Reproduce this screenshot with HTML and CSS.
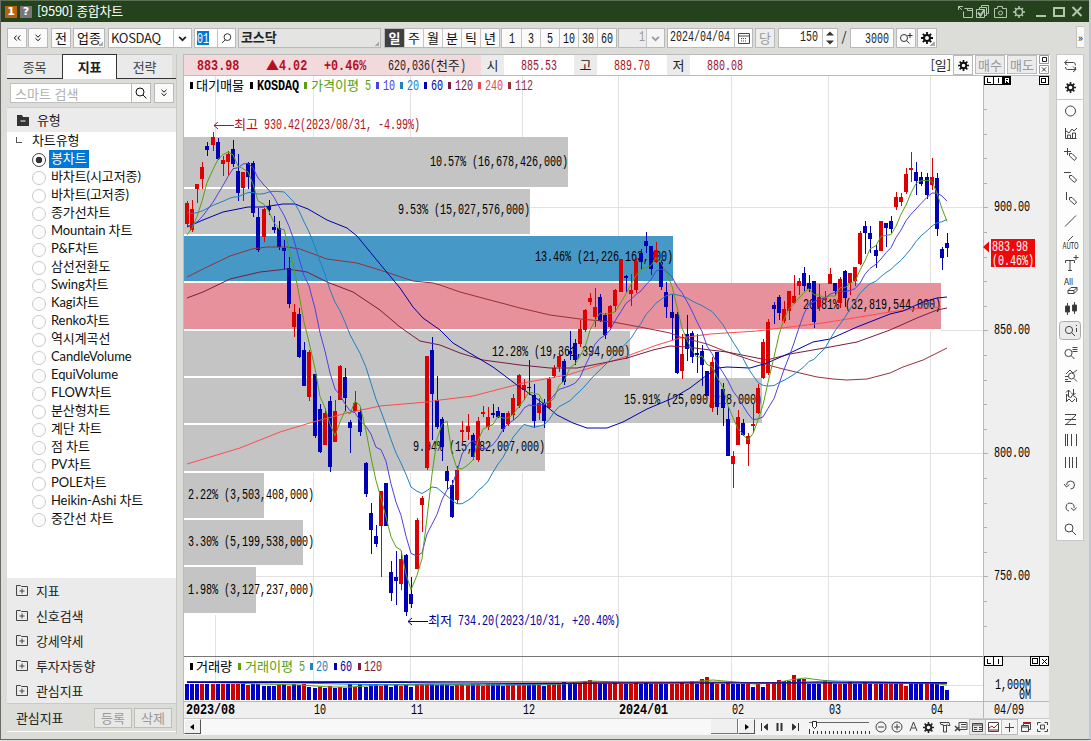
FILE: index.html
```
<!DOCTYPE html>
<html lang="ko">
<head>
<meta charset="UTF-8">
<meta name="viewport" content="width=device-width, initial-scale=1.0">
<title>[9590] 종합차트</title>
<link rel="stylesheet" href="styles.css">
</head>
<body>
<svg class="defs" width="0" height="0">
    <symbol id="gear" viewBox="0 0 12 12"><circle cx="6" cy="6" r="3" fill="none" stroke="currentColor" stroke-width="2"/><path d="M6 0v3M6 9v3M0 6h3M9 6h3M1.8 1.8l2 2M8.2 8.2l2 2M10.2 1.8l-2 2M3.8 8.2l-2 2" stroke="currentColor" stroke-width="1.8"/></symbol>
    <symbol id="search" viewBox="0 0 12 12"><circle cx="5" cy="5" r="4" fill="none" stroke="currentColor"/><path d="M8 8l3.5 3.5" stroke="currentColor"/></symbol>
    <symbol id="search-r" viewBox="0 0 12 12"><circle cx="7" cy="4.5" r="3.7" fill="none" stroke="currentColor"/><path d="M4.5 7.5L1 11" stroke="currentColor"/></symbol>
    <symbol id="down2" viewBox="0 0 8 8"><path d="M1.5 .8L4 3.2 6.500 .8M1.500 4.300L4 6.700l2.500-2.400" fill="none" stroke="currentColor"/></symbol>
    <symbol id="down" viewBox="0 0 8 8"><path d="M1 2.500l3 3 3-3" fill="none" stroke="currentColor" stroke-width="1.500"/></symbol>
    <symbol id="folder" viewBox="0 0 12 11"><path d="M.5 .5h4l1 1h6v9H.5z" fill="none" stroke="#444"/><path d="M6 3.500v5M3.500 6h5" stroke="#444"/></symbol>
</svg>

<div class="window">
    <div class="titlebar">
        <span class="badge orange">1</span>
        <span class="badge gray">?</span>
        <span class="title">[9590] 종합차트</span>
        <svg class="title-icons" width="126" height="16" fill="none" stroke="#b4c6ae">
            <path d="M0 2.500h5M.5 2v4M1 3l3 3M5.500 7.500v6h9v-9h-5v2h5M9.500 4.500h-3"/>
            <path d="M18.500 5.500h8v8h-8zM21.500 5V3.500h7v8H27M23.500 3V1.500h7v8H29"/><path d="M20 8.500l2.500 3 4-6" stroke-width="2"/>
            <path d="M36.500 4.500h3v-2h5v2h4v9h-12z"/><circle cx="42.500" cy="9" r="2"/>
            <circle cx="61" cy="8" r="3.600" stroke-width="1.500"/><path d="M61 2v2M61 12v2M55 8h2M65 8h2M57 4l1.500 1.500M63.500 10.500L65 12M65 4l-1.500 1.500M58.500 10.500L57 12" stroke-width="1.500"/>
            <path d="M78 12h10" stroke-width="2"/>
            <path d="M96 4h10v8H96z" stroke-width="2"/>
            <path d="M114.500 3l9 9M123.500 3l-9 9" stroke-width="2"/>
        </svg>
    </div>

    <div class="toolbar">
        <button class="btn"><svg width="8" height="8" viewBox="0 0 8 8" class="rot"><use href="#down2"/></svg></button>
        <button class="btn"><svg width="8" height="8"><use href="#down2"/></svg></button>
        <button class="btn g3">전</button>
        <button class="btn upj corner">업종</button>
        <div class="combo"><span>KOSDAQ</span><i><svg width="9" height="9"><use href="#down"/></svg></i></div>
        <div class="code"><b><span class="num c2">01</span></b><i><svg width="11" height="11"><use href="#search-r"/></svg></i></div>
        <div class="name corner">코스닥</div>
        <div class="seg period"><b>일</b><span>주</span><span>월</span><span>분</span><span>틱</span><span>년</span></div>
        <div class="seg mins"><div><span class="num c1">1</span></div><div><span class="num c1">3</span></div><div><span class="num c1">5</span></div><div><span class="num c2">10</span></div><div><span class="num c2">30</span></div><div><span class="num c2">60</span></div></div>
        <div class="unit"><span class="num c1">1</span><i><svg width="9" height="9"><use href="#down"/></svg></i></div>
        <div class="date"><span class="num c10">2024/04/04</span><i><svg width="12" height="12" fill="none" stroke="#444"><path d="M.5 1.500h11v10H.5zM.5 4h11"/><path d="M3 6.500h6M3 9h6" stroke-dasharray="1 1"/></svg></i></div>
        <button class="btn g2 off">당</button>
        <div class="spin"><span class="num c3">150</span><i><svg width="8" height="16" fill="#333"><path d="M0 5.500l4-4 4 4zM0 10.500l4 4 4-4z"/></svg></i></div>
        <span class="slash">/</span>
        <div class="max"><span class="num c4">3000</span></div>
        <button class="btn g2"><svg width="14" height="12" fill="none" stroke="#333"><circle cx="5" cy="6" r="3.500"/><path d="M7.500 8.500l3 3M11 1v5M8.500 3.500h5"/></svg></button>
        <button class="btn corner"><svg width="12" height="12"><use href="#gear"/></svg></button>
        <button class="more">»</button>
    </div>

    <div class="content">
        <div class="side">
            <div class="tabs"><span>종목</span><b>지표</b><span>전략</span></div>
            <div class="find">
                <input type="text" placeholder="스마트 검색">
                <button class="btn glass"><svg width="12" height="12"><use href="#search"/></svg></button>
                <button class="btn g2"><svg width="8" height="8"><use href="#down2"/></svg></button>
            </div>
            <div class="group"><svg width="12" height="11"><path d="M0 0h5l1 2h6v9H0z" fill="#333"/><path d="M3.500 6h5" stroke="#fff"/></svg>유형</div>
            <div class="tree">
                <div class="root">차트유형</div>
                <ul id="types"></ul>
            </div>
            <div class="folders">
                <div><svg width="12" height="11"><use href="#folder"/></svg>지표</div>
                <div><svg width="12" height="11"><use href="#folder"/></svg>신호검색</div>
                <div><svg width="12" height="11"><use href="#folder"/></svg>강세약세</div>
                <div><svg width="12" height="11"><use href="#folder"/></svg>투자자동향</div>
                <div><svg width="12" height="11"><use href="#folder"/></svg>관심지표</div>
            </div>
            <div class="side-foot"><span>관심지표</span><button>등록</button><button>삭제</button></div>
        </div>

        <div class="main">
            <div class="quote">
                <div class="pink">
                    <div class="q1"><b class="num">883.98</b></div><div class="q2"><em>▲</em><b class="num">4.02</b></div><div class="q3"><b class="num">+0.46%</b></div><div class="q4"><span class="num c8">620,036(</span>천주<span class="num c1">)</span></div>
                </div>
                <span class="lab">시</span><span class="val"><span class="num c6">885.53</span></span>
                <span class="lab">고</span><span class="val"><span class="num c6">889.70</span></span>
                <span class="lab">저</span><span class="val"><span class="num c6">880.08</span></span>
                <span class="day">[일]</span>
                <button class="btn gearbtn"><svg width="11" height="11"><use href="#gear"/></svg></button>
                <button class="trade">매수</button>
                <button class="trade">매도</button>
                <svg class="mini" width="10" height="19" fill="#fff" stroke="#999"><path d="M.5 .5h9v8h-9zM.5 10.500h9v8h-9z"/><path d="M3.500 2.500h4v4h-4z" stroke="#222"/><path d="M3 12.500l4 4M7 12.500l-4 4" stroke="#333"/></svg>
            </div>

            <svg class="chart" width="866" height="642" viewBox="184 76 866 642">
                <rect x="184" y="76" width="799" height="625" fill="#fff"/>
                <rect x="984" y="76" width="65" height="642" fill="#efefef"/>
                <rect x="184" y="701" width="800" height="17" fill="#efefef"/>
                <g id="grid" stroke="#e2e2e2" shape-rendering="crispEdges"></g>
                <g id="profile"></g>
                <g id="volumes" shape-rendering="crispEdges"></g>
                <g id="candles" shape-rendering="crispEdges"></g>
                <g id="lines" fill="none" stroke-width="1"></g>
                <g stroke="#888" shape-rendering="crispEdges">
                    <path d="M184 656.500h865" stroke="#777"/>
                    <path d="M983.500 76v642M184 701.500h865" stroke="#b8b8b8"/>
                </g>
                <g id="ticks" stroke="#b0b0b0" shape-rendering="crispEdges"></g>
                <g id="legend"></g>
                <g id="labels"></g>
                <path d="M214 125.500h20M218 122l-4 3.500 4 3.500" fill="none" stroke="#b01020"/>
                <path d="M408 621.500h20M412 618l-4 3.500 4 3.500" fill="none" stroke="#0000a0"/>
                <rect x="991" y="239" width="44" height="28" fill="#f00808"/>
                <path d="M983 247l6-5.500v11z" fill="#f00808"/>
                <g id="price"></g>
                <g fill="#fff" stroke="#000" shape-rendering="crispEdges">
                    <path d="M984.500 76.500h9v8h-9zM993.500 76.500h9v8h-9zM1039.500 76.500h9v8h-9zM984.500 656.500h9v9h-9zM993.500 656.500h9v9h-9zM1030.500 656.500h9v9h-9zM1039.500 656.500h9v9h-9z"/>
                    <path d="M1003.500 76.500h7v8h-7z" fill="#000"/>
                    <path d="M1041.500 78.500h4v4h-4zM1032.500 658.500h5v5h-5z"/>
                    <path d="M987.500 78v4.500h3M998.500 78v5M987.500 659v4.500h3M998.500 659v5M1042 659l5 5M1047 659l-5 5" fill="none"/>
                    <path d="M1005.500 83v-4.500h3v2h-3M1007 80.500l2 2" stroke="#fff" fill="none"/>
                </g>
            </svg>

            <div class="bottom">
                <button class="arrow"><svg width="5" height="6"><path d="M4 0v6L0 3z"/></svg></button>
                <div class="track"><div class="thumb"></div></div>
                <button class="arrow"><svg width="5" height="6"><path d="M1 0v6l4-3z"/></svg></button>
                <svg class="play" width="116" height="16" fill="#333" stroke="#333">
                    <path d="M6.500 4v8M12.500 5v6L9 8z"/><path d="M22.500 4v8M26.500 4v8" stroke-width="2"/><path d="M37.500 5v6L41 8zM43.500 4v8"/>
                    <path d="M54 3.500h60" stroke="#666"/><path d="M54.500 10v5" /><path d="M54 13.500h61" stroke-width="3" stroke-dasharray="1 3"/><path d="M57.500 2.500h4v5l-2 2-2-2z" fill="#fff" stroke="#222"/>
                </svg>
                <svg class="bicons" width="176" height="16" fill="none" stroke="#444">
                    <circle cx="8" cy="8" r="5"/><path d="M5 8h6"/>
                    <circle cx="24" cy="8" r="5"/><path d="M21 8h6M24 5v6"/>
                    <path d="M37 12l3.500-9 3.500 9M38.500 9h4"/>
                    <use href="#gear" x="50" y="3" width="11" height="11"/>
                    <path d="M67 3.500h9l1 3h-2l-1-1v1h-4v-1h-2zM70.500 7v6h3V7"/>
                    <path d="M86 3.500h8v7h-8zM88 5.500h5M88 8h5"/><path d="M82 12l4-4M82 7l5 5" stroke-width="1.500"/>
                    <rect x="96.500" y=".5" width="16" height="15" fill="#e6e6e6" stroke="#bbb"/><path d="M99.500 4.500h10v8h-10zM99.500 6h10M101 8.500h3M101 10.500h3M106 8.500h3M106 10.500h3"/>
                    <rect x="112.500" y=".5" width="16" height="15" fill="#fff" stroke="#bbb"/><path d="M115.500 3.500h10v9h-10z"/><path d="M116 9l3-2 2 2 4-4M116 11h9" stroke="#a02020"/>
                    <rect x="128.500" y=".5" width="16" height="15" fill="#f4f4f4" stroke="#bbb"/><path d="M132 8.500h9M136.500 4v9"/>
                    <path d="M148.500 6.500h7v6h-7zM150.500 6V4.500h7v6h-2M148.500 8h7"/><path d="M150 3.500h8" stroke="#a02020"/>
                    <path d="M164.500 6V3.500h3M174.500 6V3.500h-3M164.500 10v2.500h3M174.500 10v2.500h-3M167.500 6h4v4h-4z"/>
                </svg>
            </div>
        </div>

        <div class="tools">
            <svg width="26" height="485" fill="none" stroke="#444">
                <path d="M8.500 9.500V7.500h8q2 0 2 3M10.500 5l-3 2.500 3 2.500M18.500 12v2.500h-8q-2 0-2-2.500M16 11.500l3 3-3 2.500"/>
                <use href="#gear" x="8" y="27" width="11" height="11"/>
                <path d="M0 44.500h26" stroke="#c8c8c8"/>
                <circle cx="13.500" cy="56" r="5"/>
                <path d="M8.500 73v10.500h11M10.500 84v-4h3v4M15.500 84v-6h3v6M9 76l3 2 3-4 2 2 3-3"/>
                <path d="M7 96.500h7M10.500 93v7M12.500 98.500h2.500l4.500 4.500-2 2.500-5-4.500z"/>
                <path d="M7 117.500h7M12.500 120.500h2.500l4.500 4.500-2 2.500-5-4.500z"/>
                <path d="M9.500 137v8M12.500 142.500h2.500l4.500 4.500-2 2.500-5-4.500z"/>
                <path d="M8 171.500L19 160.500"/>
                <path d="M11 186l5-5"/>
                <path d="M8.500 208v-2.500h9V208M13 206v9M11 215.500h4M16.500 202.500h5M19 200v5"/>
                <path d="M11 235.500l3-3h6v3l-3 3h-6zM11 235.500h6l3-3M17 235.500v3"/>
                <path d="M10.500 248v12M17.500 247v12"/><path d="M8.500 251h4v6h-4zM15.500 250h4v6h-4z" fill="#333"/>
                <rect x="2.500" y="266.500" width="21" height="18" rx="3" fill="#ebebeb" stroke="#aaa"/>
                <circle cx="12" cy="275" r="3.600"/><path d="M14.500 277.500l3.500 3.500M19.500 273v4M19.500 270v1"/>
                <circle cx="11.500" cy="298" r="3.600"/><path d="M14 300.500l3.500 3.500M15.500 292.500h5M15.500 294.500h5M15.500 296.500h5"/>
                <circle cx="14.500" cy="321" r="3"/><path d="M17 323.500l3 3M8 324.500h3M8 321.500h3M8 326.500h6M9 319l4-4 3 3 4-3"/>
                <path d="M9.500 347v-8l4 4 2-3 4 3v4M11.500 342v-7M9 337.500l2.500-2.500 2.500 2.500M16.500 334v6M14.500 338l2 2 2-2M9 347l3-3 3 3 3-3"/>
                <path d="M8 359.500h11M19 360L9 369.500M8 364.500h11M8 369.500h11"/>
                <path d="M8.500 379v12M10.500 379v12M14.500 379v12M19.500 379v12"/>
                <path d="M8.500 402v11M12.500 402v11M15.500 402v11M19.500 402v11"/>
                <path d="M9.500 430a4 4 0 1 1 4 4M7 429l2.500 3 3-2.500"/>
                <path d="M12 456a4 4 0 1 1 5-3M14 453l3 2.500 2.500-3"/>
                <circle cx="12" cy="473" r="4"/><path d="M15 476l4 4"/>
                <text x="5.500" y="194" textLength="16" lengthAdjust="spacingAndGlyphs" class="tiny">AUTO</text>
                <text x="7" y="230" textLength="9" lengthAdjust="spacingAndGlyphs" class="tiny">All</text>
            </svg>
        </div>
    </div>
</div>
<script src="chart.js"></script>
</body>
</html>
```

FILE: styles.css
```
* {
    box-sizing: border-box;
}
body {
    margin: 0;
    width: 1091px;
    height: 741px;
    overflow: hidden;
    background-color: #dcdcd8;
    font-family: "Noto Sans CJK KR", sans-serif;
    font-size: 13px;
    letter-spacing: -0.1px;
    line-height: 18px;
    color: #222;
}
button {
    padding: 0;
    font-family: inherit;
    font-size: 13px;
    line-height: 16px;
    color: #111;
}
svg {
    display: block;
}
.defs {
    position: absolute;
}
i {
    font-style: normal;
}
.window {
    height: 740px;
    border-left: 1px solid #6a6a68;
    border-bottom: 1px solid #6a6a68;
    border-right: 2px solid #c2c8d0;
}

/* narrow fixed-width digits, 6px a cell */
.num {
    display: inline-block;
    font-family: "Liberation Mono", monospace;
    font-size: 14px;
    letter-spacing: 0;
    white-space: nowrap;
    text-align: left;
    transform: scaleX(0.714);
    transform-origin: 0 50%;
}
.c1 { width: 6px; }
.c2 { width: 12px; }
.c3 { width: 18px; }
.c4 { width: 24px; }
.c6 { width: 36px; }
.c8 { width: 48px; }
.c10 { width: 60px; }

/* title bar */
.titlebar {
    height: 22px;
    background-color: #24431c;
    border-top: 1px solid #5c7056;
    display: flex;
    align-items: center;
    padding-left: 4px;
    color: #fff;
}
.badge {
    width: 12px;
    height: 12px;
    margin-right: 3px;
    font: bold 11px/12px "DejaVu Sans", sans-serif;
    text-align: center;
}
.orange {
    background-color: #b8620c;
}
.gray {
    background-color: #77777a;
}
.title {
    margin: -2px 0 0 2px;
    letter-spacing: -0.3px;
}
.title-icons {
    margin-left: auto;
    margin-right: 5px;
}

/* toolbar */
.toolbar {
    height: 32px;
    padding: 6px 5px 0 6px;
    display: flex;
}
.btn, .combo, .code, .name, .unit, .date, .spin, .max {
    height: 20px;
    border: 1px solid #b9b9b9;
    background-color: #fafafa;
}
.btn {
    width: 20px;
    margin-right: 1px;
    display: flex;
    align-items: center;
    justify-content: center;
}
.rot {
    transform: rotate(90deg);
}
.g2 {
    margin-left: 2px;
}
.g3 {
    margin: 0 2px;
}
.upj {
    width: 32px;
    margin-right: 3px;
}
.corner {
    background-image: linear-gradient(135deg, transparent 50%, #aaa 50%);
    background-size: 5px 5px;
    background-position: right 1px bottom 1px;
    background-repeat: no-repeat;
}
.combo, .code, .unit, .date, .spin {
    display: flex;
    line-height: 17px;
    background-color: #fff;
}
.combo i, .code i, .unit i, .date i, .spin i {
    margin-left: auto;
    width: 18px;
    display: flex;
    align-items: center;
    justify-content: center;
    border-left: 1px solid #c4c4c4;
}
.combo {
    width: 84px;
    padding-left: 2px;
    margin-right: 2px;
    letter-spacing: -0.3px;
}
.code {
    width: 42px;
    padding-left: 2px;
    margin-right: 2px;
}
.code b {
    height: 14px;
    margin-top: 2px;
    line-height: 14px;
    font-weight: normal;
    color: #fff;
    background-color: #0078d7;
}
.name {
    width: 143px;
    padding-left: 2px;
    line-height: 16px;
    font-weight: bold;
    background-color: #e4e4e2;
    margin-right: 3px;
}
.seg {
    height: 20px;
    border: 1px solid #b9b9b9;
    display: flex;
    margin-right: 1px;
    background-color: #fafafa;
    color: #111;
}
.seg > * {
    width: 19px;
    line-height: 18px;
    text-align: center;
    border-left: 1px solid #c6c6c6;
}
.seg > :first-child {
    border-left: 0;
}
.seg b {
    background-color: #404040;
    color: #fff;
}
.period, .mins {
    width: 116px;
}
.unit {
    width: 47px;
    margin-right: 2px;
    background-color: #ececec;
    color: #999;
}
.unit span {
    margin-left: 20px;
}
.unit i {
    background-color: #f5f5f5;
}
.date {
    width: 86px;
    padding-left: 2px;
}
.off {
    background-color: #eee;
    color: #999;
}
.spin {
    width: 60px;
    margin-left: 2px;
}
.spin span {
    margin-left: 21px;
}
.spin i {
    width: 15px;
}
.slash {
    width: 12px;
    text-align: center;
}
.max {
    width: 44px;
    text-align: right;
    padding-right: 4px;
    line-height: 17px;
    background-color: #fff;
}
.more {
    width: 8px;
    height: 22px;
    margin: -2px 0 0 auto;
    border: 1px solid #c4c4c4;
    border-right: 0;
    background-color: #f8f8f8;
    font-size: 11px;
}

.content {
    display: flex;
    height: 680px;
}

/* left panel */
.side {
    width: 170px;
    margin-left: 6px;
    border-right: 1px solid #c9c9c6;
    display: flex;
    flex-direction: column;
}
.tabs {
    display: flex;
    height: 25px;
    line-height: 23px;
    text-align: center;
    border-bottom: 1px solid #333;
}
.tabs span {
    width: 55px;
    background-color: #eaeaea;
    border-top: 1px solid #c4c4c4;
    color: #444;
}
.tabs b {
    width: 55px;
    height: 25px;
    border: 1px solid #333;
    border-bottom: 0;
    background-color: #fff;
}
.find {
    display: flex;
    height: 28px;
    padding: 4px 0 0 3px;
}
.find input {
    width: 122px;
    height: 20px;
    border: 1px solid #c0c0c0;
    padding: 0 4px;
    font: 13px "Noto Sans CJK KR", sans-serif;
}
.find input::placeholder {
    color: #b0b0b0;
}
.glass {
    margin-left: -1px;
}
.group {
    height: 25px;
    padding-left: 10px;
    display: flex;
    align-items: center;
    gap: 8px;
    background-color: #ebebeb;
    border-top: 1px solid #d0d0d0;
}
.tree {
    height: 446px;
    background-color: #fff;
    font-family: Lato, "Noto Sans CJK KR", sans-serif;
    color: #111;
}
.root {
    position: relative;
    padding-left: 25px;
    height: 18px;
    line-height: 17px;
}
.root::before {
    content: "";
    position: absolute;
    left: 9px;
    top: 5px;
    width: 5px;
    height: 5px;
    border-left: 1px solid #555;
    border-bottom: 1px solid #555;
}
.tree ul {
    list-style: none;
    margin: 0;
    padding: 0;
}
.tree li {
    height: 18px;
    line-height: 17px;
    padding-left: 25px;
    display: flex;
}
.tree li::before {
    content: "";
    width: 12px;
    height: 12px;
    margin: 3px 4px 0 0;
    border: 1px solid #c8c8c8;
    border-radius: 50%;
}
.tree li span {
    padding: 0 2px;
    margin-left: -1px;
}
.tree li.on::before {
    border-color: #444;
    background: radial-gradient(#333 3px, #fff 3.6px);
}
.tree li.on span {
    background-color: #0078d7;
    color: #fff;
}
.folders {
    background-color: #ebebeb;
}
.folders div {
    height: 25px;
    padding-left: 9px;
    display: flex;
    align-items: center;
    gap: 8px;
}
.side-foot {
    height: 29px;
    padding: 0 4px 0 9px;
    display: flex;
    align-items: center;
    border-top: 1px solid #c9c9c6;
    border-bottom: 1px solid #fff;
}
.side-foot span {
    flex: 1;
}
.side-foot button {
    width: 38px;
    height: 20px;
    margin-left: 2px;
    border: 1px solid #bdbdbb;
    background-color: #e8e8e6;
    color: #999;
}

/* quote row */
.main {
    width: 867px;
    margin-left: 6px;
    border-left: 1px solid #bbb;
}
.quote {
    height: 22px;
    display: flex;
    background-color: #fff;
    border-top: 1px solid #bbb;
    border-bottom: 1px solid #bbb;
    line-height: 19px;
}
.pink {
    width: 297px;
    display: flex;
    background-color: #f1d9dc;
}
.pink b, .pink em {
    color: #b80f1e;
    font-style: normal;
}
.pink b.num {
    transform: scaleX(0.84);
}
.q1 {
    width: 82px;
    padding-left: 13px;
}
.q2 {
    width: 58px;
    white-space: nowrap;
}
.q3 {
    width: 64px;
}
.lab {
    width: 23px;
    text-align: center;
    background-color: #ebebeb;
}
.val {
    width: 70px;
    text-align: center;
    color: #a81020;
}
.day {
    margin-left: auto;
}
.gearbtn {
    margin: 0 2px;
}
.trade {
    width: 30px;
    height: 19px;
    margin-right: 2px;
    border: 1px solid #bbb;
    background-color: #ececec;
    color: #999;
}
.mini {
    margin-right: 1px;
}
.chart .ko {
    font: 13px "Noto Sans CJK KR", sans-serif;
}
.chart .en {
    font-family: "Liberation Mono", monospace;
    font-size: 14px;
}

/* scroll bar and chart buttons */
.bottom {
    height: 17px;
    display: flex;
    background-color: #f4f4f4;
    border-top: 1px solid #ccc;
}
.arrow {
    width: 17px;
    height: 15px;
    border: 1px solid #fff;
    border-right-color: #555;
    border-bottom-color: #555;
    background-color: #f0f0f0;
    display: flex;
    align-items: center;
    justify-content: center;
}
.track {
    width: 537px;
    height: 15px;
    background-color: #f8f8f8;
}
.thumb {
    width: 27px;
    height: 15px;
    margin-left: auto;
    background-color: #f0f0f0;
    border-right: 1px solid #777;
    border-bottom: 1px solid #777;
}
.bicons {
    margin-left: 2px;
}

/* drawing tools */
.tools {
    width: 28px;
    height: 487px;
    margin-left: 6px;
    border: 1px solid #c8c8c8;
    background-color: #fdfdfd;
}
.tiny {
    font: 8px "DejaVu Sans", sans-serif;
    fill: #222;
    stroke: none;
}
```

FILE: chart.js
```
var NS = 'http://www.w3.org/2000/svg';
var CELL = 6; // width of one latin character, hangul takes two

function add(id, tag, attrs, text) {
    var el = document.createElementNS(NS, tag);
    for (var k in attrs) el.setAttribute(k, attrs[k]);
    if (text) el.textContent = text;
    document.getElementById(id).appendChild(el);
}

// hangul and latin runs are set separately, each on its own cell width
function label(id, x, y, str, color, bold) {
    var runs = str.match(/[가-힣]+|[^가-힣]+/g);
    runs.forEach(function (run) {
        var ko = run.charCodeAt(0) > 0x2000;
        var w = run.length * (ko ? 12 : bold ? 7 : CELL);
        var lead = run.length - run.trimStart().length;
        add(id, 'text', {
            'class': ko ? 'ko' : 'en', x: x + lead * CELL, y: y, fill: color || '#000',
            textLength: w - lead * CELL, lengthAdjust: 'spacingAndGlyphs', 'font-weight': bold ? 'bold' : 'normal'
        }, run.trimStart());
        x += w;
    });
}

// chart type list
var types = ['봉차트', '바차트(시고저종)', '바차트(고저종)', '종가선차트', 'Mountain 차트', 'P&F차트', '삼선전환도', 'Swing차트', 'Kagi차트', 'Renko차트', '역시계곡선', 'CandleVolume', 'EquiVolume', 'FLOW차트', '분산형차트', '계단 차트', '점 차트', 'PV차트', 'POLE차트', 'Heikin-Ashi 차트', '중간선 차트'];
types.forEach(function (t, i) {
    var li = document.createElement('li');
    var s = document.createElement('span');
    s.textContent = t;
    li.appendChild(s);
    if (i == 0) li.className = 'on';
    document.getElementById('types').appendChild(li);
});

// grid
[215.5, 313.5, 410.5, 522.5, 618.5, 731.5, 828.5, 930.5].forEach(function (x) {
    add('grid', 'path', {d: 'M' + x + ' 76V701'});
});
[207.5, 330.5, 453.5, 576.5, 685.5].forEach(function (y) {
    add('grid', 'path', {d: 'M184 ' + y + 'H983'});
});
for (var t = 0; t < 22; t++) {
    add('ticks', 'path', {d: 'M984 ' + (109.5 + Math.round(t * 24.6)) + 'h' + (t % 5 == 4 ? 4 : 3)});
}

// volume profile: y, height, right edge, colour, label
var profile = [
    [137, 50, 568, '#c4c4c4', '10.57% (16,678,426,000)'],
    [189, 45, 530, '#c4c4c4', '9.53% (15,027,576,000)'],
    [236, 45, 673, '#4698c6', '13.46% (21,226,163,000)'],
    [283, 46, 941, '#e6919b', '20.81% (32,819,544,000)'],
    [331, 45, 630, '#c4c4c4', '12.28% (19,361,394,000)'],
    [378, 45, 762, '#c4c4c4', '15.91% (25,090,218,000)'],
    [425, 46, 545, '#c4c4c4', '9.94% (15,682,007,000)'],
    [473, 45, 264, '#c4c4c4', '2.22% (3,503,408,000)'],
    [520, 45, 303, '#c4c4c4', '3.30% (5,199,538,000)'],
    [567, 46, 256, '#c4c4c4', '1.98% (3,127,237,000)']
];
profile.forEach(function (p, i) {
    add('profile', 'rect', {x: 184, y: p[0], width: p[2] - 184, height: p[1], fill: p[3]});
    add('profile', 'path', {d: 'M184 ' + (p[0] + p[1] + 1) + 'H' + p[2], stroke: '#fff', 'stroke-width': 2});
    label('profile', Math.max(188, p[2] - p[4].length * CELL), 166 + Math.round(i * 47.5), p[4]);
});

// candles: up(1)/down(0), high, body top, body bottom, low
var candles = [
    [1,201,203,224,227],[1,200,209,230,232],[1,184,184,189,203],[1,162,167,179,189],[0,142,146,150,156],
    [1,132,137,145,151],[0,138,142,159,160],[1,156,160,164,176],[1,151,154,162,175],[0,140,149,164,167],
    [0,154,171,193,201],[1,172,172,188,201],[0,162,163,177,189],[0,161,163,213,217],[0,208,217,250,252],
    [1,208,209,237,242],[0,200,206,210,215],[0,216,227,230,233],[0,221,228,247,250],[0,240,248,251,269],
    [0,257,268,304,308],[1,304,312,327,337],[0,308,314,357,358],[0,342,350,386,386],[1,350,352,397,401],
    [0,374,374,436,438],[0,404,409,452,453],[1,408,413,445,445],[0,396,401,467,472],[1,400,411,442,442],
    [1,365,366,400,400],[0,368,377,398,411],[0,420,422,428,453],[1,391,403,411,412],[0,408,412,432,436],
    [0,462,463,494,497],[0,503,513,530,554],[0,525,536,544,547],[1,491,491,526,577],[0,483,483,526,526],
    [0,561,572,593,601],[0,551,577,581,605],[1,551,559,584,590],[0,554,555,612,616],[0,577,594,604,608],
    [1,518,520,569,569],[1,496,498,505,532],[1,356,356,468,470],[0,337,350,394,440],[0,376,400,427,429],
    [0,417,419,447,461],[0,466,471,481,489],[0,480,485,517,518],[1,466,470,500,504],[1,421,430,432,442],
    [1,414,426,432,440],[0,433,435,457,460],[1,417,421,460,462],[1,406,412,414,417],[1,407,417,427,430],
    [0,404,413,415,418],[0,407,411,417,418],[0,413,413,429,432],[1,411,413,424,426],[1,394,398,415,420],
    [1,374,375,406,408],[1,379,385,390,400],[0,360,387,388,395],[0,384,395,421,428],[1,398,403,413,420],
    [0,399,403,421,428],[1,377,379,408,409],[1,365,368,376,378],[1,350,356,367,372],[0,359,361,382,385],
    [0,331,351,354,360],[0,339,343,360,365],[1,320,329,344,347],[1,309,310,330,332],[1,293,298,302,305],
    [1,288,307,317,327],[0,294,297,321,322],[0,313,315,335,339],[1,305,306,327,328],[1,289,290,306,312],
    [1,259,259,292,292],[0,275,276,278,292],[1,274,290,294,306],[1,258,261,290,293],[0,249,253,262,269],
    [0,232,241,246,253],[0,246,246,269,275],[1,242,250,262,263],[0,260,262,287,290],[0,282,292,307,318],
    [0,294,312,318,340],[0,312,314,373,374],[1,334,354,371,379],[0,315,334,349,361],[0,331,333,357,363],
    [0,334,353,355,373],[0,345,351,365,386],[0,371,371,396,396],[1,357,362,408,412],[0,352,352,407,415],
    [0,383,389,408,426],[0,407,419,456,456],[1,451,456,464,488],[1,410,417,445,445],[0,419,423,435,436],
    [1,433,436,444,466],[1,403,424,426,433],[1,384,388,413,414],[1,339,342,378,379],[1,319,322,373,375],
    [0,302,305,309,324],[0,295,297,313,320],[1,301,309,321,323],[1,291,291,311,320],[1,275,296,303,304],
    [1,278,281,286,295],[0,267,273,286,291],[0,275,283,289,292],[0,281,281,322,328],[1,284,297,307,311],
    [1,291,297,300,304],[1,268,274,284,284],[0,283,283,291,296],[1,277,279,303,308],[0,270,271,298,307],
    [1,273,273,283,295],[1,267,267,281,286],[1,231,233,264,265],[0,221,226,233,254],[0,226,233,239,253],
    [0,245,250,256,268],[1,221,221,251,251],[0,223,223,228,247],[0,216,221,229,233],[1,192,197,207,210],
    [1,193,197,202,206],[1,168,174,192,194],[1,152,168,170,182],[0,162,172,181,195],[0,172,177,184,186],
    [0,173,177,195,199],[1,158,177,185,190],[0,173,178,229,236],[0,247,249,258,270],[0,233,243,248,257]
];
function cx(i) { return Math.round(187 + i * 5.1); }

candles.forEach(function (c, i) {
    var color = c[0] ? '#dc0000' : '#0000b4';
    add('candles', 'rect', {x: cx(i), y: c[1], width: 1, height: c[4] - c[1], fill: color});
    add('candles', 'rect', {x: cx(i) - 2, y: c[2], width: 4, height: Math.max(1, c[3] - c[2]), fill: color});
});

// moving averages over the closes, seeded with the bars left of the window
var closes = [200,200,200,200,200,200,200,200,200,200,217,217,217,217,217,243,243,243,243];
candles.forEach(function (c) { closes.push(c[0] ? c[2] : c[3]); });
function average(n, color) {
    var pts = candles.map(function (c, i) {
        var sum = 0;
        for (var k = 0; k < n; k++) sum += closes[i + 19 - k];
        return cx(i) + ',' + (sum / n).toFixed(1);
    });
    add('lines', 'polyline', {points: pts.join(' '), stroke: color});
}
add('lines', 'polyline', {stroke: '#ff4c4c', points: '187,464 240,448 280,432 313,422 347,413 380,406 427,402 440,400 473,396 523,383 567,375 600,365 627,356 657,345 680,338 710,334 757,331 823,323 890,312 923,308 941,307'});
add('lines', 'polyline', {stroke: '#983038', points: '187,277 203,269 230,256 252,249 267,247 287,247 300,249 327,259 357,263 383,271 413,281 433,283 440,285 460,292 490,300 520,308 550,315 580,319 613,322 640,327 670,333 680,337 707,344 727,352 757,362 783,369 817,377 833,379 847,380 867,379 890,373 903,367 923,360 947,348'});
add('lines', 'polyline', {stroke: '#7a1c40', points: '187,298 203,292 230,279 260,272 287,269 307,272 327,282 353,292 380,310 400,327 420,341 440,345 460,353 483,360 520,365 550,368 577,368 603,363 627,358 653,350 670,346 687,347 710,350 727,352 757,358 767,360 790,354 830,347 857,342 890,330 917,318 937,310 947,308'});
add('lines', 'polyline', {stroke: '#0000a8', points: '187,227 203,220 223,212 248,207 263,207 283,204 295,204 308,209 327,220 347,228 357,236 380,264 400,288 413,307 423,318 440,330 453,343 473,355 493,367 517,385 540,401 557,415 573,423 587,428 607,428 623,422 647,409 673,398 690,388 707,375 718,368 727,367 750,368 767,363 790,353 813,342 830,339 857,327 890,314 903,311 923,302 937,298 947,297'});
average(20, '#2080c0');
average(10, '#5040e0');
average(5, '#58a010');

// volume pane, bars that stand out from the usual height
var volTops = {12: 685, 13: 684, 15: 686, 16: 686, 17: 686, 18: 685, 20: 686, 22: 685, 24: 687, 25: 688, 26: 687, 27: 688, 28: 686, 29: 688, 30: 687, 31: 688, 33: 687, 35: 687, 38: 686, 40: 687, 42: 686, 44: 687, 49: 685, 52: 686, 55: 685, 58: 686, 62: 686, 66: 685, 70: 686, 74: 682, 78: 682, 79: 680, 80: 682, 84: 683, 88: 682, 90: 682, 97: 683, 99: 681, 101: 679, 102: 677, 103: 683, 106: 682, 111: 687, 113: 687, 115: 682, 116: 680, 117: 681, 118: 681, 119: 675, 120: 679, 121: 679, 125: 680, 126: 682, 130: 681, 133: 682, 141: 686, 148: 686, 149: 690};
var volHead = 'BBBRBRBRBRRBRBBBBBRBRBBRBBRBRBR';
var volTail = 'BBRRRRRBRRBRBRBBBRBRBRRRBRRBRBBBRRBRBRBBRBRBRRBRRBBBRBB';
for (var v = 0; v < 150; v++) {
    var y = volTops[v] || 684;
    var up = v < volHead.length ? volHead[v] == 'R' : v >= 93 ? volTail[v - 93] == 'R' : candles[v][0];
    add('volumes', 'rect', {x: cx(v) - 2, y: y, width: 4, height: 700 - y, fill: up ? '#cc0000' : '#0000c8'});
}
add('lines', 'polyline', {stroke: '#58a010', points: '187,682 230,683 260,684 300,685 330,687 350,687 380,685 430,684 480,685 530,685 560,684 590,681 620,682 660,683 690,682 713,680 735,682 755,684 775,683 790,680 805,678 820,680 840,682 870,682 910,683 930,683 947,685'});
add('lines', 'polyline', {stroke: '#2080c0', points: '187,682 300,683 340,684 400,685 480,685 560,684 640,682 720,682 780,683 830,681 890,682 947,683'});
add('lines', 'path', {d: 'M187 681.5H400L947 683.500', stroke: '#7a1c40'});
add('lines', 'path', {d: 'M187 682.5H400L520 683.500L947 682.500', stroke: '#0000a8'});

function legend(y, items) {
    items.forEach(function (it) {
        add('legend', 'rect', {x: it[0], y: y - 8, width: 3, height: 7, fill: it[2]});
        label('legend', it[0] + (it[3] || 6), y, it[1], it[2], it[1] == 'KOSDAQ');
    });
}
legend(90, [[190, '대기매물', '#000'], [250, 'KOSDAQ', '#000', 7], [304, '가격이평 5', '#58a010', 7], [376, '10', '#5040e0', 7], [400, '20', '#2080c0', 7], [424, '60', '#0000a8', 7], [448, '120', '#7a1c40', 7], [478, '240', '#e84850', 7], [508, '112', '#983038', 7]]);
legend(671, [[190, '거래량', '#000'], [238, '거래이평 5', '#58a010', 7], [310, '20', '#2080c0'], [334, '60', '#0000a8'], [358, '120', '#7a1c40']]);

label('labels', 234, 129, '최고 930.42(2023/08/31, -4.99%)', '#b01020');
label('labels', 428, 625, '최저 734.20(2023/10/31, +20.40%)', '#0000a0');
[['2023/08', 186, 1], ['10', 314], ['11', 411], ['12', 523], ['2024/01', 619, 1], ['02', 732], ['03', 829], ['04', 931], ['04/09', 994]].forEach(function (d) {
    label('labels', d[1], 714, d[0], '#000', d[2]);
});
[['900.00', 211], ['850.00', 334], ['800.00', 457], ['750.00', 580]].forEach(function (p) {
    label('labels', 994, p[1], p[0]);
});
label('labels', 995, 689, '1,000M');
label('labels', 1019, 699, '0M');
label('price', 992, 251, '883.98', '#fff');
label('price', 992, 265, '(0.46%)', '#fff');
```
